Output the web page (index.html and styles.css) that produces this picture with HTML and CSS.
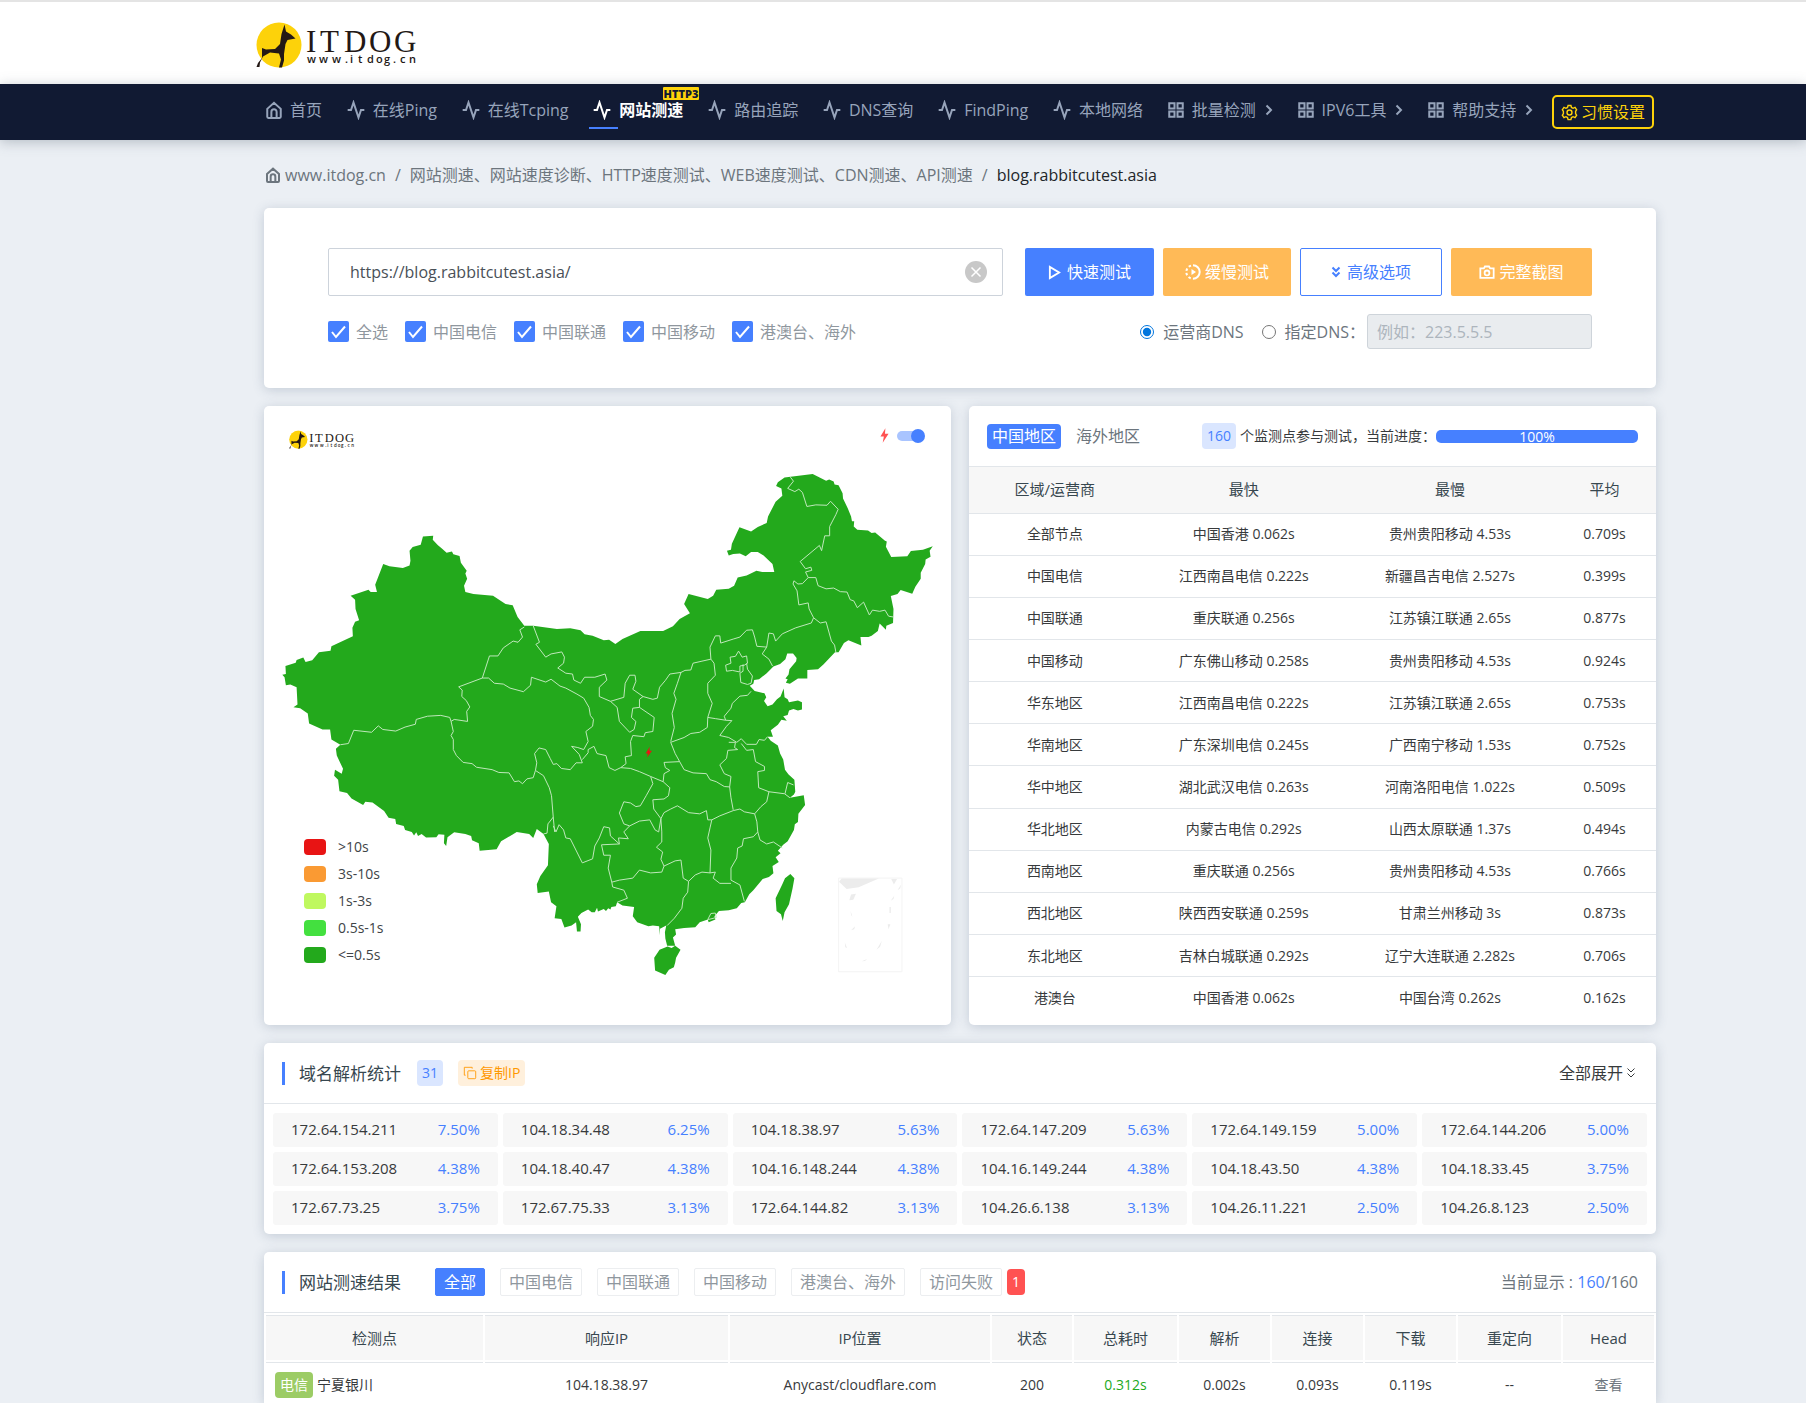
FILE: index.html
```html
<!DOCTYPE html>
<html lang="zh-CN">
<head>
<meta charset="utf-8">
<title>网站测速 - ITDOG</title>
<link rel="stylesheet" href="styles.css">
</head>
<body>
<svg class="sprite" aria-hidden="true">
  <symbol id="i-home" viewBox="0 0 24 24"><path d="M3 10.500 12 2.500l9 8V21a1.500 1.500 0 0 1-1.500 1.500h-15A1.500 1.500 0 0 1 3 21zM8.500 22v-7.500a3.500 3.500 0 0 1 7 0V22"/></symbol>
  <symbol id="i-pulse" viewBox="0 0 24 24"><path d="M22 12h-4l-3 9L9 3l-3 9H2"/></symbol>
  <symbol id="i-grid" viewBox="0 0 24 24"><path d="M3 3h7v7H3zM14 3h7v7h-7zM14 14h7v7h-7zM3 14h7v7H3z"/></symbol>
  <symbol id="i-chev" viewBox="0 0 8 12"><path d="m1.500 1.500 4.500 4.500-4.500 4.500"/></symbol>
  <symbol id="i-down" viewBox="0 0 10 12"><path d="m1.500 1.500 3.500 3.500 3.500-3.500M1.500 6.500 5 10l3.500-3.500"/></symbol>
  <symbol id="i-gear" viewBox="0 0 24 24"><circle cx="12" cy="12" r="3.500"/><path d="M10 2h4l.8 2.900 2.200 1.200 2.800-1.300 2.300 3.300-1.500 2.500v2.800l1.500 2.500-2.300 3.300-2.800-1.300-2.200 1.200L14 22h-4l-.8-2.900L7 17.900l-2.800 1.300-2.300-3.300 1.500-2.500v-2.800L1.900 8.100l2.300-3.300L7 6.100l2.200-1.200z"/></symbol>
  <symbol id="i-play" viewBox="0 0 14 16"><path d="M2 2v12l10-6z"/></symbol>
  <symbol id="i-slow" viewBox="0 0 16 16"><circle cx="8" cy="8" r="6.700" stroke-dasharray="21 2.200 2.500 2.200 2.500 2.200 2.500 2.200 2.500 2.500" transform="rotate(-90 8 8)"/><path class="solid" d="M6.500 5v6L11 8z"/></symbol>
  <symbol id="i-camera" viewBox="0 0 18 16"><path d="M1.500 4h4L6.700 1.800h4.600L12.500 4h4v10.500h-15z"/><circle cx="9" cy="9" r="2.700"/></symbol>
  <symbol id="i-copy" viewBox="0 0 16 16"><rect x="5.500" y="5.500" width="9" height="9" rx="1"/><path d="M3 10.500H1.500v-9h9V3"/></symbol>
  <symbol id="i-bolt" viewBox="0 0 10 16"><path d="M6 0 .5 9h3.800L3 16l6.500-10H5.500z"/></symbol>
  <symbol id="i-dog" viewBox="0 0 48 48">
    <circle cx="23" cy="23" r="22.500" fill="#fdd20a"/>
    <path fill="#231815" d="M28.500 2.500 30 9.500l5 3 4.500 4-8 1.500-2 4-1.500 10v6.500l-2 7h-3l2-8-2-6-9-1-7 4-3 6-.5 4.500H.500l1.500-4 4-5V26l4 1.500 9-.5 5-5 1.500-10z"/>
  </symbol>
</svg>

<header class="top">
  <a class="brand" href="#" aria-label="ITDOG">
    <svg class="logo" viewBox="0 0 160 48">
      <use href="#i-dog" width="48" height="48"/>
      <text class="logo-name" x="50 64 88 113 138" y="30">ITDOG</text>
      <text class="logo-url" x="51 63 76 89 94 102 111 120 128 137 144 153" y="41">www.itdog.cn</text>
    </svg>
  </a>
</header>

<nav class="nav">
  <ul class="menu">
    <li><a href="#"><svg class="ic"><use href="#i-home"/></svg>首页</a></li>
    <li><a href="#"><svg class="ic pulse"><use href="#i-pulse"/></svg>在线Ping</a></li>
    <li><a href="#"><svg class="ic pulse"><use href="#i-pulse"/></svg>在线Tcping</a></li>
    <li class="active"><a href="#"><svg class="ic pulse"><use href="#i-pulse"/></svg>网站测速</a><span class="flag">HTTP3</span></li>
    <li><a href="#"><svg class="ic pulse"><use href="#i-pulse"/></svg>路由追踪</a></li>
    <li><a href="#"><svg class="ic pulse"><use href="#i-pulse"/></svg>DNS查询</a></li>
    <li><a href="#"><svg class="ic pulse"><use href="#i-pulse"/></svg>FindPing</a></li>
    <li><a href="#"><svg class="ic pulse"><use href="#i-pulse"/></svg>本地网络</a></li>
    <li><a href="#"><svg class="ic"><use href="#i-grid"/></svg>批量检测<svg class="chev"><use href="#i-chev"/></svg></a></li>
    <li><a href="#"><svg class="ic"><use href="#i-grid"/></svg>IPV6工具<svg class="chev"><use href="#i-chev"/></svg></a></li>
    <li><a href="#"><svg class="ic"><use href="#i-grid"/></svg>帮助支持<svg class="chev"><use href="#i-chev"/></svg></a></li>
    <li><button class="prefs" type="button"><svg class="gear"><use href="#i-gear"/></svg>习惯设置</button></li>
  </ul>
</nav>

<main class="page">
  <nav class="crumbs">
    <a href="#"><svg class="ic"><use href="#i-home"/></svg>www.itdog.cn</a><span>/</span><a href="#">网站测速、网站速度诊断、HTTP速度测试、WEB速度测试、CDN测速、API测速</a><span>/</span><b>blog.rabbitcutest.asia</b>
  </nav>

  <form class="card search">
    <div class="row">
      <div class="url">
        <input type="text" aria-label="网址" value="https://blog.rabbitcutest.asia/">
        <button class="clear" type="button" aria-label="清空"><svg viewBox="0 0 22 22"><circle cx="11" cy="11" r="11" fill="#c8c8c8"/><path d="m6.500 6.500 9 9m0-9-9 9" stroke="#fff" stroke-width="1.500"/></svg></button>
      </div>
      <div class="actions">
        <button class="btn blue" type="button"><svg class="a"><use href="#i-play"/></svg>快速测试</button>
        <button class="btn orange" type="button"><svg class="b"><use href="#i-slow"/></svg>缓慢测试</button>
        <button class="btn line" type="button"><svg class="c"><use href="#i-down"/></svg>高级选项</button>
        <button class="btn orange" type="button"><svg class="b"><use href="#i-camera"/></svg>完整截图</button>
      </div>
    </div>
    <div class="row options">
      <div class="checks">
        <label><input type="checkbox" checked>全选</label>
        <label><input type="checkbox" checked>中国电信</label>
        <label><input type="checkbox" checked>中国联通</label>
        <label><input type="checkbox" checked>中国移动</label>
        <label><input type="checkbox" checked>港澳台、海外</label>
      </div>
      <div class="dns">
        <label><input type="radio" name="dns" checked>运营商DNS</label>
        <label><input type="radio" name="dns">指定DNS：</label>
        <input class="dns-ip" type="text" aria-label="指定DNS" placeholder="例如：223.5.5.5" disabled>
      </div>
    </div>
  </form>

  <div class="split">
    <section class="card map">
      <svg class="china" viewBox="0 0 687 619" role="img" aria-label="中国地图">
        <g transform="translate(-4 -6) scale(.44643 .40179)">
          <path class="land" d="M365 340 388 338 387 348 398 361 408 370 418 380 430 377 433 384 447 388 450 405 463 425 460 432 464 445 457 462 460 478 478 483 522 487 550 508 566 511 577 540 592 562 612 562 665 570 695 568 718 573 727 583 745 587 770 598 782 597 796 607 812 595 852 575 903 575 925 563 940 545 963 531 950 508 960 483 1003 495 1015 487 1022 472 1050 470 1062 462 1070 442 1090 437 1112 425 1125 428 1152 428 1148 408 1128 387 1115 378 1100 378 1088 389 1075 382 1060 383 1050 387 1046 375 1055 373 1057 358 1074 317 1100 327 1115 316 1135 306 1138 290 1155 253 1170 238 1168 220 1156 214 1160 205 1175 193 1238 184 1268 201 1275 198 1285 203 1287 210 1296 212 1305 232 1306 245 1316 268 1324 290 1326 302 1331 302 1330 315 1338 323 1362 325 1370 331 1378 330 1400 350 1404 352 1402 365 1414 391 1450 389 1458 376 1485 373 1507 364 1500 375 1502 390 1491 397 1490 408 1480 430 1480 445 1468 465 1461 482 1435 473 1428 483 1413 488 1419 520 1418 555 1403 562 1402 572 1388 556 1384 575 1370 587 1363 590 1345 590 1347 611 1318 598 1308 605 1296 628 1288 628 1262 658 1250 670 1226 672 1226 693 1205 693 1187 706 1178 704 1182 695 1177 693 1184 683 1186 670 1201 650 1202 642 1194 631 1181 631 1177 645 1165 657 1150 663 1135 680 1118 695 1107 697 1105 706 1097 711 1108 724 1130 730 1134 740 1129 749 1137 762 1148 758 1158 745 1166 738 1173 718 1175 740 1182 745 1185 752 1205 748 1214 752 1214 770 1205 773 1195 769 1185 773 1182 784 1172 787 1180 798 1168 796 1160 808 1144 822 1149 838 1137 838 1144 848 1160 860 1165 880 1172 895 1176 920 1184 932 1197 945 1199 975 1196 982 1187 990 1218 984 1221 1008 1206 1030 1205 1050 1198 1056 1196 1070 1182 1098 1172 1107 1160 1122 1166 1128 1155 1138 1162 1150 1148 1160 1150 1178 1140 1187 1126 1192 1105 1220 1096 1230 1086 1250 1078 1252 1068 1265 1050 1270 1028 1272 1018 1285 1020 1293 1005 1300 1003 1293 985 1300 975 1312 950 1314 930 1317 932 1330 925 1338 930 1358 912 1358 908 1340 907 1325 910 1308 896 1316 896 1332 894 1310 880 1308 870 1310 845 1300 835 1285 838 1262 812 1258 800 1250 797 1260 787 1262 785 1268 780 1265 775 1272 770 1267 757 1273 755 1264 750 1275 743 1275 735 1268 720 1277 712 1286 719 1305 718 1323 710 1323 708 1300 698 1308 682 1313 675 1292 660 1290 664 1260 652 1250 647 1223 622 1227 620 1205 628 1185 645 1158 647 1105 635 1080 620 1068 612 1090 603 1080 575 1075 565 1082 540 1098 530 1118 492 1122 490 1103 475 1096 473 1085 460 1080 435 1076 420 1088 417 1110 412 1103 413 1082 400 1081 395 1088 372 1089 362 1080 354 1085 350 1076 345 1084 340 1075 325 1070 322 1060 305 1055 303 1043 288 1040 278 1023 252 1002 236 1000 231 1008 205 992 195 978 178 974 175 945 166 935 168 920 183 930 186 918 172 885 170 868 180 858 160 845 157 820 140 820 110 805 107 780 90 767 75 765 84 758 82 715 68 708 58 710 55 690 50 684 58 682 57 662 80 654 82 647 97 641 102 652 117 648 132 628 158 624 160 613 208 588 207 567 213 552 222 548 214 520 213 497 203 487 243 472 248 478 262 478 258 460 276 408 290 414 320 418 335 412 337 400 335 375 342 366 360 360zM895 1368 913 1360 922 1364 930 1358 942 1368 932 1388 930 1400 927 1412 916 1418 908 1431 885 1420 883 1388zM1188 1180 1197 1190 1193 1215 1185 1255 1175 1275 1171 1297 1167 1280 1157 1272 1155 1240 1170 1205 1176 1190z"/>
          <path class="border" d="M592 565 582 572 588 590 578 603 567 600 545 617 533 637 514 637 498 692 445 714 453 722 452 738 462 748 470 764 463 775 465 800 435 795 428 800 425 790 405 785 375 787 350 795 348 807 325 814 304 824 275 820 265 811 250 827 210 822 198 855 180 858M428 800 433 825 428 835 433 845 433 870 440 885 455 902 475 905 485 914 520 920 535 927 558 928 570 950 580 948 588 955 598 943 612 940 617 922 620 903 615 880 625 866 640 870 650 892 657 907 665 905 675 917 695 920 708 903 722 903 715 882 698 862 712 865 725 870 735 850 730 825 745 812 747 795 740 785 737 765 725 742 710 732 685 717 672 712 652 695 640 702 608 690 606 710 590 726 560 717 545 707 525 705 512 692 498 692M612 562 626 603 618 608 640 640 652 632 676 627 682 640 680 655 667 667 685 680 700 682 703 697 718 705 727 690 750 690 773 682 777 697 760 715 760 738 785 750 815 740 818 705 828 685 840 685 842 700 835 720 858 738 850 745 850 765 835 767 832 790 842 800 838 820 828 827 805 800 800 765 785 750M850 765 883 790 880 825 863 828 860 838 835 835 830 850 832 885 818 888 820 905 808 915M858 738 880 745 890 742 895 715 908 698 918 682 943 678 935 705 927 730 932 745 923 780 928 815 920 850M943 678 952 673 965 672 970 655 990 650 1010 645 1017 655 1020 685 1003 705 1003 730 1013 755 1003 790 1002 815 985 827 965 830 950 840 920 852M1010 645 1008 615 1020 587 1030 587 1032 605 1060 595 1075 590 1090 573 1103 572 1108 590 1113 613 1135 615 1125 632 1140 645 1148 662M1135 615 1140 580 1150 582 1155 600 1170 582 1200 567 1235 555 1240 542 1255 555 1268 552 1275 580 1280 600 1287 610 1290 628M1240 542 1230 520 1228 505 1207 510 1203 475 1194 458 1196 450 1205 458 1215 457 1228 442 1245 442 1250 462 1268 470 1285 468 1300 477 1315 478 1322 497 1330 500 1338 517 1352 503 1365 535 1372 523 1388 526 1400 523 1408 538 1418 540M1228 442 1222 428 1236 424 1234 416 1222 420 1210 402 1253 362 1258 375 1265 338 1276 338 1276 315 1290 285 1295 272 1278 252 1270 262 1245 261 1225 265 1215 230 1207 222 1198 228 1182 220 1195 202 1188 192M1072 625 1080 640 1090 637 1092 655 1085 660 1075 662 1075 677 1058 673 1045 675 1043 660 1055 655 1053 640 1065 638zM1090 655 1092 670 1103 687 1100 705 1092 708 1077 703 1075 680 1082 675 1082 658M1100 725 1092 735 1075 737 1058 755 1055 767 1040 787 1043 797 1020 793 1003 790M1043 797 1057 798 1045 812 1030 835 1050 840 1068 852 1078 843 1090 857 1112 857 1118 845 1130 847 1137 838M1050 852 1065 852 1063 865 1070 870 1048 872 1045 892 1030 908 1040 930 1055 937 1052 963 1055 990 1060 1020M920 852 930 880 940 900 950 920 970 928 1000 930 1008 945 1022 950 1040 962 1052 963M940 900 905 902 908 915 918 922 905 930 903 950 875 937 850 925 830 917 808 915 795 922 782 915 775 885 755 880 748 862 735 870 735 878 722 895M875 937 880 955 865 985 852 1010 842 1012 830 1003 815 1000 805 1028 815 1055 828 1060 850 1048 873 1045 885 1070 893 1075 898 1042 882 1018 880 995 905 993 915 985 918 965 903 950M898 1042 905 1027 920 1018 935 1010 960 1027 985 1030 1000 1022 1003 1045 1012 1045 1030 1035 1060 1022 1075 1018 1085 1025 1108 1030 1122 1012 1135 1000 1140 975 1117 965 1115 925 1130 922 1130 912 1110 900 1105 870 1090 872 1078 855M1140 975 1175 980 1187 990M1176 980 1182 952 1195 958M1108 1030 1113 1050 1115 1075 1120 1095 1135 1105 1150 1100 1170 1115M1115 1075 1105 1087 1083 1092 1080 1110 1070 1115 1068 1140 1055 1165 1055 1195 1075 1207 1085 1248M1012 1045 1008 1065 1003 1090 1010 1120 1008 1177 1020 1175 1015 1190 1030 1203 1055 1203M1008 1177 990 1175 975 1182 960 1198 948 1190 943 1145 930 1147 905 1160 898 1143 902 1125 888 1113 900 1100 900 1075 898 1042M905 1160 900 1175 875 1177 850 1170 835 1190 805 1195 788 1200 780 1165 785 1133 770 1133 765 1107 805 1105 803 1090 825 1092 815 1075 828 1060M660 1075 657 1040 653 985 648 965 635 935 617 922M657 1038 645 1055 643 1078 635 1080M657 1060 663 1075 670 1057 680 1070 685 1090 695 1092 722 1152 745 1142 750 1110 760 1090 770 1062 783 1065 785 1085 805 1105M788 1200 790 1212 815 1220 823 1240 800 1250M960 1198 958 1225 948 1240 945 1265 928 1290 912 1308M1003 1293 1010 1278 1020 1277 1022 1288 1008 1292z"/>
          <path class="bolt" d="M873 863 864 880 869 880 867 890 878 873 872 873z"/>
          <g class="inset"><path class="frame" d="M1296 1190h142v233h-142z"/><path d="M1303 1191h83l-45 22-27 4-17-18zM1324 1231l11-2-6 15-9 1zM1414 1192h13l-7 14zM1410 1262h3v15h-3zM1406 1305h6l-4 12zM1310 1350l5 14-4-2zM1324 1320l9-10-2 7zM1381 1368l12-22-4 15zM1413 1246l8-13-2 9zM1348 1397l12-6-5 5zM1323 1272l4 14-3-4zM1428 1220l8-14-2 10z"/></g>
        </g>
      </svg>
      <svg class="logo map-logo" viewBox="0 0 160 48">
        <use href="#i-dog" width="48" height="48"/>
        <text class="logo-name" x="50 64 88 113 138" y="30">ITDOG</text>
        <text class="logo-url" x="51 63 76 89 94 102 111 120 128 137 144 153" y="41">www.itdog.cn</text>
      </svg>
      <label class="switch"><svg><use href="#i-bolt"/></svg><input type="checkbox" aria-label="闪电标记" checked></label>
      <ul class="legend">
        <li><i class="c1"></i>&gt;10s</li>
        <li><i class="c2"></i>3s-10s</li>
        <li><i class="c3"></i>1s-3s</li>
        <li><i class="c4"></i>0.5s-1s</li>
        <li><i class="c5"></i>&lt;=0.5s</li>
      </ul>
    </section>

    <section class="card regions">
      <div class="regions-head">
        <button class="tab on" type="button">中国地区</button>
        <button class="tab" type="button">海外地区</button>
        <div class="status"><span class="badge">160</span><span>个监测点参与测试，当前进度：</span></div>
        <div class="bar">100%</div>
      </div>
      <table class="stats">
        <thead><tr><th>区域/运营商</th><th>最快</th><th>最慢</th><th>平均</th></tr></thead>
        <tbody>
          <tr><td>全部节点</td><td>中国香港 0.062s</td><td>贵州贵阳移动 4.53s</td><td>0.709s</td></tr>
          <tr><td>中国电信</td><td>江西南昌电信 0.222s</td><td>新疆昌吉电信 2.527s</td><td>0.399s</td></tr>
          <tr><td>中国联通</td><td>重庆联通 0.256s</td><td>江苏镇江联通 2.65s</td><td>0.877s</td></tr>
          <tr><td>中国移动</td><td>广东佛山移动 0.258s</td><td>贵州贵阳移动 4.53s</td><td>0.924s</td></tr>
          <tr><td>华东地区</td><td>江西南昌电信 0.222s</td><td>江苏镇江联通 2.65s</td><td>0.753s</td></tr>
          <tr><td>华南地区</td><td>广东深圳电信 0.245s</td><td>广西南宁移动 1.53s</td><td>0.752s</td></tr>
          <tr><td>华中地区</td><td>湖北武汉电信 0.263s</td><td>河南洛阳电信 1.022s</td><td>0.509s</td></tr>
          <tr><td>华北地区</td><td>内蒙古电信 0.292s</td><td>山西太原联通 1.37s</td><td>0.494s</td></tr>
          <tr><td>西南地区</td><td>重庆联通 0.256s</td><td>贵州贵阳移动 4.53s</td><td>0.766s</td></tr>
          <tr><td>西北地区</td><td>陕西西安联通 0.259s</td><td>甘肃兰州移动 3s</td><td>0.873s</td></tr>
          <tr><td>东北地区</td><td>吉林白城联通 0.292s</td><td>辽宁大连联通 2.282s</td><td>0.706s</td></tr>
          <tr><td>港澳台</td><td>中国香港 0.062s</td><td>中国台湾 0.262s</td><td>0.162s</td></tr>
        </tbody>
      </table>
    </section>
  </div>

  <section class="card">
    <div class="head">
      <h2>域名解析统计</h2>
      <span class="badge">31</span>
      <button class="copy" type="button"><svg><use href="#i-copy"/></svg>复制IP</button>
      <a class="right expand" href="#">全部展开<svg><use href="#i-down"/></svg></a>
    </div>
    <ul class="ips">
      <li>172.64.154.211<b>7.50%</b></li><li>104.18.34.48<b>6.25%</b></li><li>104.18.38.97<b>5.63%</b></li><li>172.64.147.209<b>5.63%</b></li><li>172.64.149.159<b>5.00%</b></li><li>172.64.144.206<b>5.00%</b></li>
      <li>172.64.153.208<b>4.38%</b></li><li>104.18.40.47<b>4.38%</b></li><li>104.16.148.244<b>4.38%</b></li><li>104.16.149.244<b>4.38%</b></li><li>104.18.43.50<b>4.38%</b></li><li>104.18.33.45<b>3.75%</b></li>
      <li>172.67.73.25<b>3.75%</b></li><li>172.67.75.33<b>3.13%</b></li><li>172.64.144.82<b>3.13%</b></li><li>104.26.6.138<b>3.13%</b></li><li>104.26.11.221<b>2.50%</b></li><li>104.26.8.123<b>2.50%</b></li>
    </ul>
  </section>

  <section class="card last">
    <div class="head">
      <h2>网站测速结果</h2>
      <div class="filters">
        <button class="on" type="button">全部</button>
        <button type="button">中国电信</button>
        <button type="button">中国联通</button>
        <button type="button">中国移动</button>
        <button type="button">港澳台、海外</button>
        <button type="button">访问失败</button>
      </div>
      <span class="badge red">1</span>
      <p class="right shown">当前显示 : <b>160</b>/160</p>
    </div>
    <table class="results">
      <colgroup><col class="w1"><col class="w2"><col><col class="w4"><col class="w5"><col class="w6"><col class="w6"><col class="w6"><col class="w5"><col class="w6"></colgroup>
      <thead><tr><th>检测点</th><th>响应IP</th><th>IP位置</th><th>状态</th><th>总耗时</th><th>解析</th><th>连接</th><th>下载</th><th>重定向</th><th>Head</th></tr></thead>
      <tbody><tr><td class="node"><span class="isp">电信</span>宁夏银川</td><td>104.18.38.97</td><td>Anycast/cloudflare.com</td><td>200</td><td class="ok">0.312s</td><td>0.002s</td><td>0.093s</td><td>0.119s</td><td>--</td><td><a href="#">查看</a></td></tr></tbody>
    </table>
  </section>
</main>
</body>
</html>
```

FILE: styles.css
```css
* { box-sizing: border-box; }

body {
  margin: 0;
  background: #ebeff4;
  color: #373a3c;
  font: 16px/24px "Open Sans", "Noto Sans CJK SC", sans-serif;
}

ul { margin: 0; padding: 0; list-style: none; }
a { color: inherit; text-decoration: none; }
b { font-weight: 400; }
svg { fill: none; stroke: currentColor; flex: none; overflow: visible; }
button, input { font: inherit; margin: 0; }
button { display: inline-flex; align-items: center; justify-content: center; cursor: pointer; }
.sprite { position: absolute; width: 0; height: 0; overflow: hidden; }
.solid { fill: currentColor; stroke: none; }

.logo { display: block; width: 160px; height: 48px; fill: #231815; stroke: none; }
.logo-name { font: 31px "Liberation Serif", serif; }
.logo-url { font: 600 11px "Open Sans", sans-serif; }
#i-home path, #i-pulse path, #i-grid path { vector-effect: non-scaling-stroke; }

/* header and main menu */
.top {
  height: 84px;
  padding: 20px 150px 0 256px;
  background: #fff;
  border-top: 2px solid #e4e4e4;
}
.brand { display: block; width: 160px; }

.nav {
  height: 56px;
  padding: 0 152px 0 265px;
  background: #111a33;
  color: #97a4bb;
  box-shadow: 0 2px 12px rgba(80, 95, 110, .35);
}
.menu { display: flex; justify-content: space-between; align-items: center; height: 56px; white-space: nowrap; }
.menu li { position: relative; }
.menu li:last-child { margin-left: -5px; }
.menu a { display: flex; align-items: center; gap: 7px; height: 24px; margin-bottom: 4px; }
.ic { width: 18px; height: 18px; stroke-width: 2; }
.ic.pulse { width: 20px; height: 20px; }
.chev { width: 8px; height: 12px; margin-left: 2px; stroke-width: 2; }
.active { color: #fff; }
.active a { font-weight: 600; }
.active::after { content: ""; position: absolute; left: -3px; bottom: -3px; width: 29px; height: 2px; background: #4680ff; }
.flag {
  position: absolute; right: -16px; top: -11px;
  padding: 0 1px; background: #fdd20a; color: #111a33;
  font: 800 11px/13px "Open Sans", sans-serif; border-radius: 1px;
}
.prefs {
  height: 34px; padding: 0 7px; gap: 3px;
  background: none; color: #fdd20a;
  border: 2px solid #fdd20a; border-radius: 5px;
}
.gear { width: 17px; height: 17px; stroke-width: 2; }

/* page body */
.page { margin: 0 150px 0 264px; }
.crumbs { display: flex; align-items: center; gap: 9px; height: 68px; padding: 2px 0 0 1px; color: #6c757d; white-space: nowrap; }
.crumbs a { display: flex; align-items: center; gap: 4px; }
.crumbs .ic { width: 16px; height: 16px; }
.crumbs b { color: #212529; }

.card { margin-bottom: 18px; background: #fff; border-radius: 5px; box-shadow: 0 2px 12px rgba(69, 90, 120, .24); }

/* test form */
.search { padding: 40px 64px 39px; }
.row { display: flex; gap: 22px; }
.url { flex: 1; position: relative; }
.url input { width: 100%; height: 48px; padding: 0 21px; border: 1px solid #cdd3db; border-radius: 2px; color: #495057; background: #fff; }
.clear { position: absolute; right: 16px; top: 13px; padding: 0; border: 0; background: none; }
.clear svg { width: 22px; height: 22px; stroke: none; }
.actions { display: flex; gap: 9px; }
.btn { width: 128px; height: 48px; padding: 0; gap: 6px; color: #fff; border: 1px solid transparent; border-radius: 2px; white-space: nowrap; }
.btn svg { stroke-width: 2; }
.btn .a { width: 13px; height: 15px; }
.btn .b { width: 16px; height: 16px; margin-right: -2px; }
.btn .c { width: 10px; height: 12px; }
.blue { width: 129px; background: #4680ff; }
.orange { background: #ffba57; }
.line { width: 142px; background: #fff; color: #4680ff; border-color: #4680ff; }
.line + .btn { width: 141px; }

.options { margin-top: 18px; justify-content: space-between; height: 35px; align-items: center; }
.checks { display: flex; gap: 17px; color: #8f979e; }
.checks label, .dns label { display: flex; align-items: center; gap: 7px; white-space: nowrap; }
.checks input {
  appearance: none; width: 21px; height: 21px; border-radius: 2px;
  background: #4680ff url('data:image/svg+xml,<svg xmlns="http://www.w3.org/2000/svg" viewBox="0 0 21 21"><path d="m4 11 4 5L17 5.500" fill="none" stroke="white" stroke-width="2"/></svg>');
}
.dns { display: flex; align-items: center; gap: 18px; color: #6c757d; }
.dns label { gap: 9px; }
.dns input[type="radio"] { width: 14px; height: 14px; accent-color: #0075dd; }
.dns label + label { margin-right: -16px; }
.dns-ip { width: 225px; height: 35px; padding: 0 9px; background: #e9ecef; border: 1px solid #ced4da; border-radius: 3px; }
.dns-ip::placeholder { color: #adb5bd; }

/* map */
.split { display: grid; grid-template-columns: 1fr 1fr; gap: 18px; margin-bottom: 18px; }
.split .card { margin: 0; }
.map { position: relative; }
.china { display: block; width: 100%; }
.land { fill: #23a91c; stroke: none; }
.border { stroke: #bfe8bb; stroke-width: 1; vector-effect: non-scaling-stroke; }
.bolt { fill: #e81414; stroke: none; }
.inset path { fill: #ececec; stroke: none; }
.inset .frame { fill: none; stroke: #f2f2f2; stroke-width: 2; }
.map-logo { position: absolute; left: 25px; top: 24px; width: 65px; height: 20px; }
.switch { position: absolute; right: 26px; top: 22px; display: flex; align-items: center; gap: 8px; }
.switch svg { width: 9px; height: 15px; fill: #ff5252; stroke: none; }
.switch input { appearance: none; position: relative; width: 28px; height: 14px; }
.switch input::before { content: ""; position: absolute; left: 0; top: 2px; width: 26px; height: 10px; border-radius: 5px; background: #a9c4ff; }
.switch input::after { content: ""; position: absolute; right: 0; top: 0; width: 14px; height: 14px; border-radius: 50%; background: #4680ff; }
.legend { position: absolute; left: 40px; bottom: 57px; font-size: 14px; line-height: 27px; color: #404448; }
.legend li { display: flex; align-items: center; gap: 12px; }
.legend i { width: 22px; height: 16px; border-radius: 4px; }
.c1 { background: #e81414; }
.c2 { background: #fa9a33; }
.c3 { background: #bff85f; }
.c4 { background: #43e03f; }
.c5 { background: #23a91c; }

/* region statistics */
.regions-head { display: flex; align-items: center; height: 61px; padding: 0 18px; border-bottom: 1px solid #e2e6ea; white-space: nowrap; }
.tab { height: 25px; padding: 0 5px; border: 0; border-radius: 4px; background: none; color: #6c757d; }
.tab.on { margin-right: 10px; background: #4680ff; color: #fff; }
.status { display: flex; align-items: center; gap: 4px; margin-left: auto; font-size: 14px; }
.badge { padding: 0 5px; background: #dae6ff; color: #4680ff; border-radius: 4px; font-size: 14px; line-height: 26px; }
.bar { width: 202px; height: 13px; border-radius: 5px; background: #4680ff; color: #fff; font-size: 14px; line-height: 13px; text-align: center; }

table { width: 100%; border-collapse: collapse; table-layout: fixed; text-align: center; font-size: 14px; line-height: 20px; white-space: nowrap; }
th { padding: 0 0 2px; background: #f7f7f7; color: #37474f; font-weight: 400; font-size: 15px; }
td { padding: 0; }
.stats { height: 551px; }
.stats thead { height: 46px; }
.stats th { border-bottom: 1px solid #e2e6ea; }
.stats td { border-top: 1px solid #e2e6ea; }
.stats th:nth-child(1) { width: 25%; }
.stats th:nth-child(2), .stats th:nth-child(3) { width: 30%; }

/* card headings */
.head { display: flex; align-items: center; height: 61px; padding: 0 18px; border-bottom: 1px solid #e2e6ea; white-space: nowrap; }
h2 { margin: 0 16px 0 0; padding-left: 14px; border-left: 3px solid #4680ff; color: #37474f; font-size: 17px; font-weight: 400; line-height: 23px; }
.right { margin: 0 0 0 auto; }
.copy { height: 26px; margin-left: 15px; padding: 0 5px; gap: 3px; border: 0; border-radius: 4px; background: #fff0dc; color: #ff9800; font-size: 14px; }
.copy svg { width: 14px; height: 14px; }
.expand { display: flex; align-items: center; gap: 3px; }
.expand svg { width: 10px; height: 12px; margin-right: 2px; }

.ips { display: grid; grid-template-columns: repeat(6, 1fr); gap: 5px; padding: 9px; font-size: 15px; }
.ips li { display: flex; justify-content: space-between; padding: 0 18px 2px; line-height: 32px; background: #f7f7f7; border-radius: 3px; }
.ips b, .shown b { color: #4680ff; }

/* results */
.last { margin-bottom: 0; border-radius: 5px 5px 0 0; }
.filters { display: flex; gap: 15px; margin-left: 18px; }
.filters button { height: 28px; padding: 0 8px; border: 1px solid #eceef0; border-radius: 2px; background: #fff; color: #8f979e; }
.filters .on { background: #4680ff; border-color: #4680ff; color: #fff; }
.red { margin-left: 5px; background: #ff5252; color: #fff; }
.shown { color: #6c757d; }
.results { border-collapse: separate; border-spacing: 2px 0; padding-top: 2px; }
.results th { height: 48px; border: solid #e2e6ea; border-width: 1px 0; box-shadow: inset 0 -2px #fff; }
.results td { height: 40px; padding-top: 4px; }
.results .node { padding-left: 9px; text-align: left; }
.isp { display: inline-block; margin-right: 4px; padding: 0 5px; background: #9ccc65; color: #fff; border-radius: 4px; line-height: 26px; }
.ok { color: #23a91c; }
.results a { color: #6c757d; }
.w1 { width: 217px; }
.w2 { width: 243px; }
.w4 { width: 80px; }
.w5 { width: 103px; }
.w6 { width: 91px; }
```
